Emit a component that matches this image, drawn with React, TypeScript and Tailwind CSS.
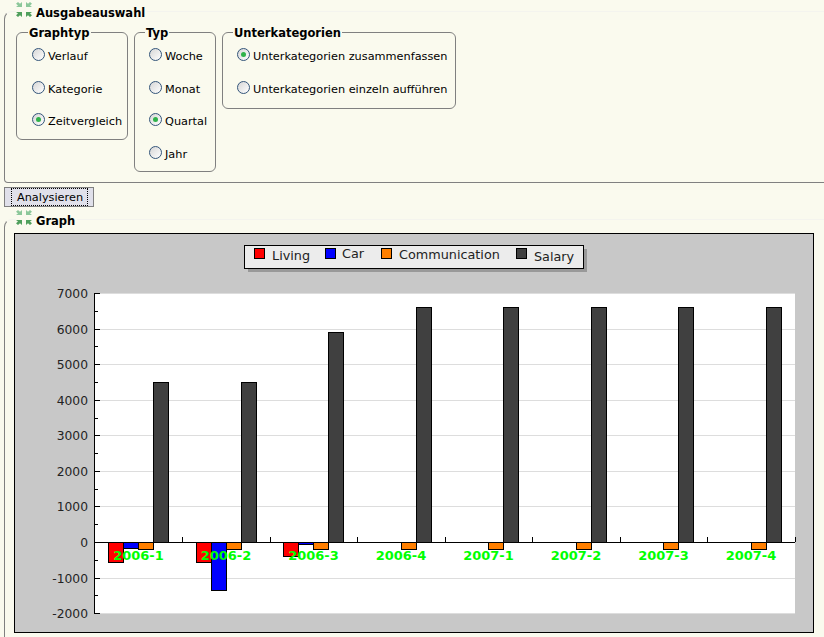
const font = { fontFamily: '"DejaVu Sans", sans-serif' };

const COLORS = ["#ff0000", "#0000ff", "#ff7f00", "#404040"];

// quarter, living, car, communication, salary
const data: [string, number, number, number, number][] = [
  ["2006-1", -570, -170, -200, 4500],
  ["2006-2", -570, -1340, -200, 4500],
  ["2006-3", -400, -50, -200, 5900],
  ["2006-4", 0, 0, -200, 6600],
  ["2007-1", 0, 0, -200, 6600],
  ["2007-2", 0, 0, -200, 6600],
  ["2007-3", 0, 0, -200, 6600],
  ["2007-4", 0, 0, -200, 6600],
];

const legend = [
  { name: "Living", box: 254, text: 272, base: 260, color: COLORS[0] },
  { name: "Car", box: 325, text: 342, base: 258, color: COLORS[1] },
  { name: "Communication", box: 381, text: 399, base: 259, color: COLORS[2] },
  { name: "Salary", box: 516, text: 534, base: 261, color: COLORS[3] },
];

const ticks = [7000, 6000, 5000, 4000, 3000, 2000, 1000, 0, -1000, -2000];
const minorTicks = [6500, 5500, 4500, 3500, 2500, 1500, 500, -500, -1500];
const STEP = 87.5;

const yOf = (v: number) => 542 - (v * 249) / 7000;

const ARROW = "M6 0v6H0l2-2-2-2 2-2 2 2z";

function CollapseIcon() {
  return (
    <svg width="16" height="16" viewBox="0 0 16 16" className="shrink-0">
      <path d={ARROW} transform="translate(0 1) scale(1 .85)" fill="#8cc79a" />
      <path d={ARROW} transform="translate(16 1) scale(-1 .85)" fill="#8cc79a" />
      <path d={ARROW} transform="translate(0 16) scale(1 -.85)" fill="#4f9f5c" />
      <path d={ARROW} transform="translate(16 16) scale(-1 -.85)" fill="#4f9f5c" />
    </svg>
  );
}

function Radio({ label, checked }: { label: string; checked?: boolean }) {
  return (
    <div className="flex h-[32.5px] items-start gap-[3px]">
      <span className="flex h-[13px] w-[13px] shrink-0 items-center justify-center rounded-full border border-[#34557a] bg-gradient-to-br from-[#d6d6d6] to-white">
        {checked && <span className="h-[5px] w-[5px] rounded-full bg-[#2fb24a]" />}
      </span>
      <span className="mt-[1px] whitespace-nowrap text-[11.3px] leading-[16px] text-black">{label}</span>
    </div>
  );
}

function Group({
  title,
  className,
  children,
}: {
  title: string;
  className: string;
  children: React.ReactNode;
}) {
  return (
    <fieldset className={`rounded-[6px] border border-[#808080] pt-[8px] ${className}`}>
      <legend className="-ml-[4px] h-[15px] px-[1px] text-[11.5px] font-bold leading-[17px] text-black">
        {title}
      </legend>
      {children}
    </fieldset>
  );
}

function Chart() {
  return (
    <svg width="800" height="400" viewBox="14 233 800 400" className="block" style={font}>
      <rect x="14" y="233" width="800" height="400" fill="#c8c8c8" />
      <rect x="14.5" y="233.5" width="799" height="399" fill="none" stroke="#000" />

      <rect x="248" y="249" width="339" height="23" fill="#999999" />
      <rect x="244.5" y="245.5" width="339" height="23" fill="#ececec" stroke="#000" />
      {legend.map((l) => (
        <g key={l.name}>
          <rect x={l.box + 0.5} y="248.5" width="10" height="10" fill={l.color} stroke="#000" />
          <text x={l.text} y={l.base} fontSize="12.8" fill="#222">
            {l.name}
          </text>
        </g>
      ))}

      <rect x="95" y="293" width="700" height="320" fill="#fff" />
      <g shapeRendering="crispEdges">
        {ticks.map((t) => (
          <line key={t} x1="95" x2="795" y1={Math.round(yOf(t)) + 0.5} y2={Math.round(yOf(t)) + 0.5} stroke="#dddddd" />
        ))}
        {data.map((row, i) => {
          const start = 108 + i * STEP;
          return row.slice(1).map((v, s) => {
            const value = v as number;
            if (value === 0) return null;
            const top = Math.round(yOf(Math.max(value, 0)));
            const bottom = Math.round(yOf(Math.min(value, 0)));
            return (
              <rect
                key={`${i}-${s}`}
                x={Math.round(start + s * 15) + 0.5}
                y={top + 0.5}
                width="15"
                height={bottom - top}
                fill={COLORS[s]}
                stroke="#000"
              />
            );
          });
        })}
        <line x1="94.5" x2="94.5" y1="293" y2="614" stroke="#000" />
        <line x1="95" x2="795" y1="542.5" y2="542.5" stroke="#000" />
        {ticks.map((t) => (
          <line key={t} x1="95" x2="100" y1={Math.round(yOf(t)) + 0.5} y2={Math.round(yOf(t)) + 0.5} stroke="#000" />
        ))}
        {minorTicks.map((t) => (
          <line key={t} x1="95" x2="98" y1={Math.round(yOf(t)) + 0.5} y2={Math.round(yOf(t)) + 0.5} stroke="#000" />
        ))}
        {data.map((_, i) => {
          const x = Math.round(182 + i * STEP) + 0.5;
          return <line key={i} x1={x} x2={x} y1="537" y2="542" stroke="#000" />;
        })}
      </g>
      {ticks.map((t) => (
        <text key={t} x="88" y={Math.round(yOf(t)) + 5} textAnchor="end" fontSize="12.3" fill="#222">
          {t}
        </text>
      ))}
      {data.map((row, i) => (
        <text
          key={row[0]}
          x={138.5 + i * STEP}
          y="560"
          textAnchor="middle"
          fontSize="13"
          fontWeight="bold"
          fill="#00ff00"
        >
          {row[0]}
        </text>
      ))}
    </svg>
  );
}

export default function App() {
  return (
    <div className="h-[637px] w-[824px] overflow-hidden bg-[#fafaee] pl-[4px] pt-[1px]" style={font}>
      <fieldset className="h-[182px] w-[840px] rounded-tl-[8px] rounded-bl-[4px] border border-[#808080] border-t-[#f4f4ee] pl-[11px] pt-[4px]">
        <legend className="flex h-[20px] items-start gap-[4px] pr-[2px]">
          <CollapseIcon />
          <span className="text-[11.5px] font-bold leading-[24px] text-black">Ausgabeauswahl</span>
        </legend>
        <div className="flex items-start gap-[6px]">
          <Group title="Graphtyp" className="h-[115px] w-[112px] pl-[15px]">
            <Radio label="Verlauf" />
            <Radio label="Kategorie" />
            <Radio label="Zeitvergleich" checked />
          </Group>
          <Group title="Typ" className="h-[147px] w-[82px] pl-[14px]">
            <Radio label="Woche" />
            <Radio label="Monat" />
            <Radio label="Quartal" checked />
            <Radio label="Jahr" />
          </Group>
          <Group title="Unterkategorien" className="h-[84px] w-[234px] pl-[14px]">
            <Radio label="Unterkategorien zusammenfassen" checked />
            <Radio label="Unterkategorien einzeln aufführen" />
          </Group>
        </div>
      </fieldset>

      <button className="mt-[4px] block h-[20px] w-[90px] border border-[#808080] bg-[#e0e0ea] py-[0px] pl-[6px] pr-[5px]">
        <span className="block h-full border border-dotted border-black pl-[1px] text-[11.3px] leading-[17px] text-black">
          Analysieren
        </span>
      </button>

      <fieldset className="mt-[2px] h-[460px] w-[840px] rounded-tl-[8px] border border-[#808080] border-t-[#f4f4ee] pl-[9px] pt-[4px]">
        <legend className="ml-[2px] flex h-[20px] items-start gap-[4px] pr-[2px]">
          <CollapseIcon />
          <span className="text-[11.5px] font-bold leading-[24px] text-black">Graph</span>
        </legend>
        <Chart />
      </fieldset>
    </div>
  );
}
